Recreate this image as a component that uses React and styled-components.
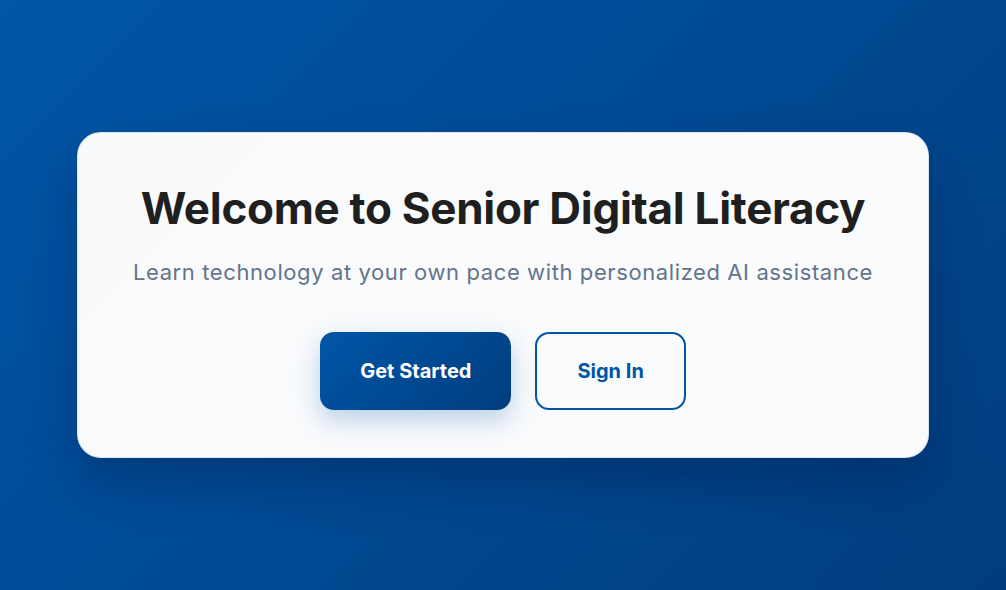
import React from 'react'
import styled, { createGlobalStyle } from 'styled-components'

const GlobalStyle = createGlobalStyle`
  html, body {
    margin: 0;
    padding: 0;
    height: 100%;
  }
  body {
    font-family: Inter, "Noto Sans", sans-serif;
  }
  #root {
    height: 100%;
  }
`

const Page = styled.main`
  min-height: 100vh;
  display: flex;
  align-items: center;
  justify-content: center;
  padding: 0 77px;
  box-sizing: border-box;
  background: linear-gradient(135deg, #0056a7 0%, #004b96 45%, #003d7d 100%);
`

const Card = styled.section`
  width: 100%;
  box-sizing: border-box;
  padding: 49px 48px 47px;
  border-radius: 24px;
  border: 1px solid rgba(200, 215, 235, 0.6);
  background: linear-gradient(135deg, #f8fafc 0%, #f9fbfd 100%);
  box-shadow: 0 25px 50px rgba(0, 20, 60, 0.3);
  text-align: center;
`

const Title = styled.h1`
  margin: 0 0 20px;
  font-size: 44px;
  line-height: 1.2;
  font-weight: 700;
  color: #1f1f1f;
  letter-spacing: -0.3px;
`

const Subtitle = styled.p`
  margin: 0 0 42px;
  font-size: 22px;
  line-height: 1.6;
  letter-spacing: 0.6px;
  color: #64748b;
`

const Actions = styled.div`
  display: flex;
  justify-content: center;
  gap: 24px;
`

const Button = styled.button`
  font-family: inherit;
  font-size: 20px;
  font-weight: 700;
  line-height: 1.2;
  height: 78px;
  padding: 0 40px;
  border-radius: 14px;
  cursor: pointer;
  box-sizing: border-box;
  border: ${({ $primary }) => ($primary ? 'none' : '2px solid #0055a5')};
  color: ${({ $primary }) => ($primary ? '#ffffff' : '#0055a5')};
  background: ${({ $primary }) =>
    $primary ? 'linear-gradient(135deg, #0056a7 0%, #003d7f 100%)' : 'transparent'};
  box-shadow: ${({ $primary }) => ($primary ? '0 10px 24px rgba(0, 85, 165, 0.25)' : 'none')};
`

export default function App() {
  return (
    <>
      <GlobalStyle />
      <Page>
        <Card>
          <Title>Welcome to Senior Digital Literacy</Title>
          <Subtitle>Learn technology at your own pace with personalized AI assistance</Subtitle>
          <Actions>
            <Button $primary>Get Started</Button>
            <Button>Sign In</Button>
          </Actions>
        </Card>
      </Page>
    </>
  )
}
